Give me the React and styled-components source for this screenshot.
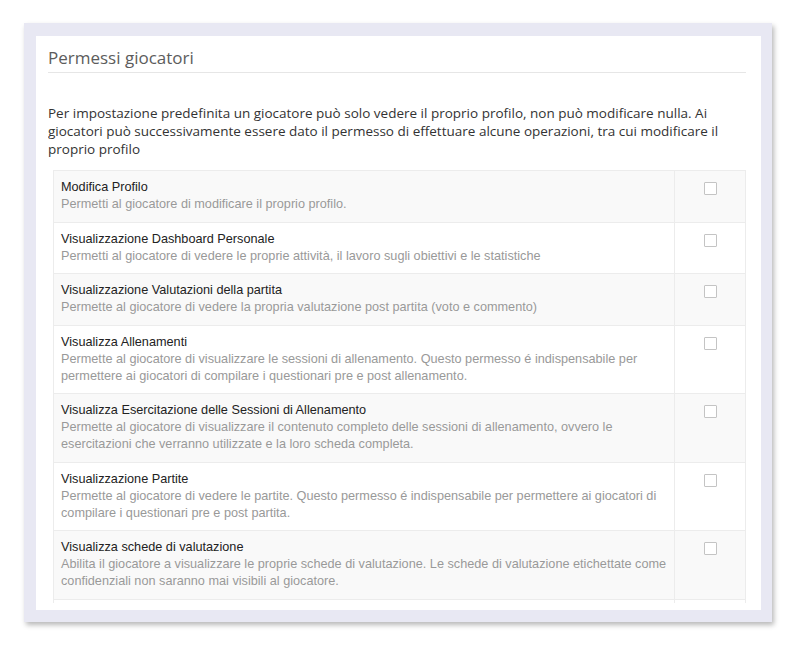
import React from "react";
import styled, { createGlobalStyle } from "styled-components";

const Global = createGlobalStyle`
  html, body { margin: 0; padding: 0; background: #ffffff; }
  body { font-family: "Open Sans", "Liberation Sans", sans-serif; }
  * { box-sizing: border-box; }
`;

const Page = styled.div`
  width: 800px;
  height: 647px;
  padding: 23px 0 0 24px;
  background: #ffffff;
`;

const Frame = styled.div`
  width: 748px;
  height: 599px;
  padding: 13px 11px 12px 12px;
  background: #e8e8f3;
  box-shadow: 2px 3px 5px rgba(0, 0, 0, 0.28);
  display: flex;
`;

const Panel = styled.section`
  flex: 1;
  background: #ffffff;
  padding: 10px 15px 7px 12px;
  display: flex;
  flex-direction: column;
  overflow: hidden;
`;

const Title = styled.h2`
  margin: 0;
  font-family: "Open Sans", sans-serif;
  font-weight: 400;
  font-size: 17px;
  line-height: 24px;
  color: #5c5c5c;
  padding-bottom: 2px;
  border-bottom: 1px solid #e6e6e6;
`;

const Body = styled.div`
  flex: 1;
  overflow: hidden;
`;

const Intro = styled.p`
  margin: 31px 0 12px 0;
  font-family: "Open Sans", sans-serif;
  font-size: 13.5px;
  line-height: 18px;
  color: #333333;
`;

const Table = styled.table`
  margin-left: 5px;
  width: 693px;
  border-collapse: collapse;
  font-family: "Liberation Sans", Arial, sans-serif;
  font-size: 12.7px;
  line-height: 17px;
`;

const Row = styled.tr`
  background: ${(p) => (p.$odd ? "#f9f9f9" : "#ffffff")};
`;

const TextCell = styled.td`
  border: 1px solid #ececec;
  padding: 8px 7px 8.5px 7px;
  vertical-align: top;
`;

const CheckCell = styled.td`
  border: 1px solid #ececec;
  width: 71px;
  padding: 11px 0 8px 0;
  vertical-align: top;
  text-align: center;
`;

const Name = styled.div`
  color: #222222;
`;

const Desc = styled.div`
  color: #999999;
`;

const Box = styled.span`
  display: inline-block;
  width: 13px;
  height: 13px;
  border: 1px solid #c4c4c4;
  background: #ffffff;
  border-radius: 1px;
  vertical-align: top;
`;

const rows = [
  {
    name: "Modifica Profilo",
    desc: "Permetti al giocatore di modificare il proprio profilo.",
  },
  {
    name: "Visualizzazione Dashboard Personale",
    desc: "Permetti al giocatore di vedere le proprie attività, il lavoro sugli obiettivi e le statistiche",
  },
  {
    name: "Visualizzazione Valutazioni della partita",
    desc: "Permette al giocatore di vedere la propria valutazione post partita (voto e commento)",
  },
  {
    name: "Visualizza Allenamenti",
    desc: "Permette al giocatore di visualizzare le sessioni di allenamento. Questo permesso é indispensabile per permettere ai giocatori di compilare i questionari pre e post allenamento.",
  },
  {
    name: "Visualizza Esercitazione delle Sessioni di Allenamento",
    desc: "Permette al giocatore di visualizzare il contenuto completo delle sessioni di allenamento, ovvero le esercitazioni che verranno utilizzate e la loro scheda completa.",
  },
  {
    name: "Visualizzazione Partite",
    desc: "Permette al giocatore di vedere le partite. Questo permesso é indispensabile per permettere ai giocatori di compilare i questionari pre e post partita.",
  },
  {
    name: "Visualizza schede di valutazione",
    desc: "Abilita il giocatore a visualizzare le proprie schede di valutazione. Le schede di valutazione etichettate come confidenziali non saranno mai visibili al giocatore.",
  },
  {
    name: "Visualizza Statistiche",
    desc: "Permette al giocatore di vedere le proprie statistiche.",
  },
];

export default function App() {
  return (
    <>
      <Global />
      <Page>
        <Frame>
          <Panel>
            <Title>Permessi giocatori</Title>
            <Body>
              <Intro>
                Per impostazione predefinita un giocatore può solo vedere il proprio profilo, non può
                modificare nulla. Ai giocatori può successivamente essere dato il permesso di effettuare
                alcune operazioni, tra cui modificare il proprio profilo
              </Intro>
              <Table>
                <tbody>
                  {rows.map((r, i) => (
                    <Row key={r.name} $odd={i % 2 === 0}>
                      <TextCell>
                        <Name>{r.name}</Name>
                        <Desc>{r.desc}</Desc>
                      </TextCell>
                      <CheckCell>
                        <Box />
                      </CheckCell>
                    </Row>
                  ))}
                </tbody>
              </Table>
            </Body>
          </Panel>
        </Frame>
      </Page>
    </>
  );
}
